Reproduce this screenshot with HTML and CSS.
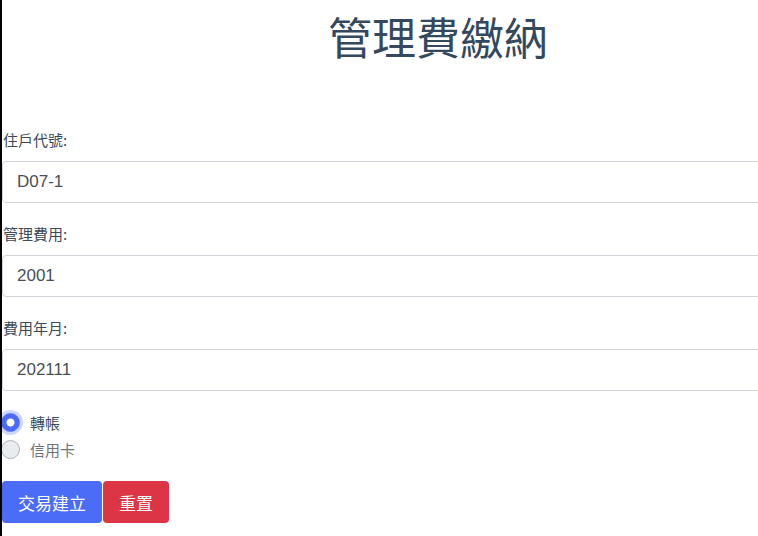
FILE: index.html
```html
<!DOCTYPE html>
<html lang="zh-Hant">
<head>
<meta charset="utf-8">
<title>管理費繳納</title>
<link rel="stylesheet" href="styles.css">
</head>
<body>
<div class="page">
  <form class="fee-form">
    <h1 class="title">管理費繳納</h1>
    <div class="group">
      <label class="label" for="unit">住戶代號:</label>
      <input class="field" id="unit" type="text" value="D07-1">
    </div>
    <div class="group">
      <label class="label" for="fee">管理費用:</label>
      <input class="field" id="fee" type="text" value="2001">
    </div>
    <div class="group group-last">
      <label class="label" for="month">費用年月:</label>
      <input class="field" id="month" type="text" value="202111">
    </div>
    <div class="radios">
      <label class="radio-row"><input class="radio" type="radio" name="pay" checked><span class="radio-text">轉帳</span></label>
      <label class="radio-row"><input class="radio" type="radio" name="pay"><span class="radio-text muted">信用卡</span></label>
    </div>
    <div class="actions">
      <button type="button" class="btn btn-primary">交易建立</button>
      <button type="button" class="btn btn-danger">重置</button>
    </div>
  </form>
</div>
</body>
</html>
```
FILE: styles.css
```css
html, body {
  margin: 0;
  padding: 0;
  background: #fff;
  overflow: hidden;
}
body {
  width: 758px;
  height: 536px;
  font-family: "Noto Sans CJK TC", "Noto Sans", sans-serif;
  color: #2c3e50;
}
.page {
  width: 758px;
  height: 536px;
  border-left: 2px solid #000;
  box-sizing: border-box;
  overflow: hidden;
}
.fee-form {
  width: 872px;
  display: flex;
  flex-direction: column;
}
.title {
  margin: 0 0 57px 0;
  height: 72px;
  line-height: 72px;
  font-size: 44px;
  font-weight: 400;
  text-align: center;
  color: #34495e;
}
.group {
  display: flex;
  flex-direction: column;
  margin-bottom: 20px;
}
.group-last {
  margin-bottom: 18px;
}
.label {
  height: 22px;
  line-height: 22px;
  font-size: 15px;
  margin: 0 0 10px 1px;
  color: #3b4a5a;
}
.field {
  box-sizing: border-box;
  height: 42px;
  margin: 0;
  padding: 0 14px;
  border: 1px solid #ced4da;
  border-radius: 4px;
  font-family: "Liberation Sans", Arial, sans-serif;
  font-size: 17px;
  color: #495057;
  background: #fff;
  outline: none;
}
.radios {
  display: flex;
  flex-direction: column;
  margin-bottom: 18px;
}
.radio-row {
  display: flex;
  align-items: center;
  height: 27px;
  gap: 10px;
}
.radio {
  appearance: none;
  -webkit-appearance: none;
  box-sizing: border-box;
  width: 19px;
  height: 19px;
  margin: 0 0 0 -1px;
  border-radius: 50%;
  border: 1px solid #adb5bd;
  background: #e9ecef;
}
.radio:checked {
  border-color: #4a6cf7;
  background: radial-gradient(circle, #fff 0 3.5px, #4a6cf7 4.5px);
  box-shadow: 0 0 0 3px rgba(74, 108, 247, 0.28);
}
.radio-text {
  font-size: 15px;
  color: #3b4a5a;
}
.radio-text.muted {
  color: #6c757d;
}
.actions {
  display: flex;
  gap: 1px;
}
.btn {
  height: 42px;
  padding: 0 16px;
  border: none;
  border-radius: 4px;
  font-family: "Noto Sans CJK TC", "Noto Sans", sans-serif;
  font-size: 17px;
  color: #fff;
  cursor: pointer;
}
.btn-primary {
  background: #4a6cf7;
}
.btn-danger {
  background: #dc3545;
}
```
